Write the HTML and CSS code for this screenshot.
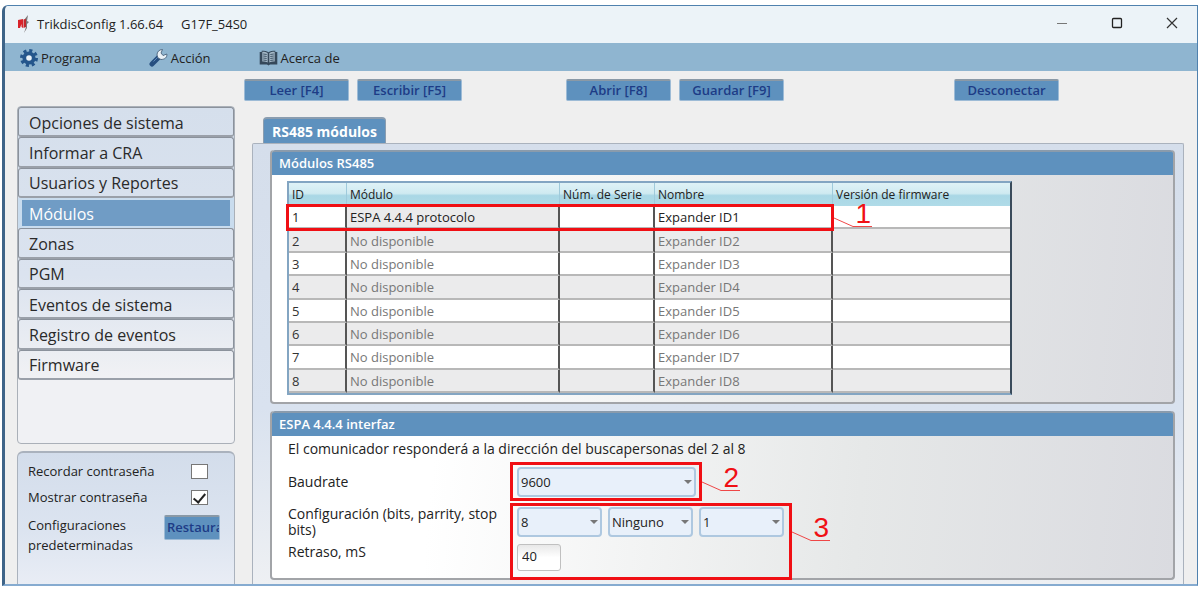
FILE: index.html
```html
<!DOCTYPE html>
<html lang="es">
<head>
    <meta charset="UTF-8">
    <meta name="viewport" content="width=device-width, initial-scale=1.0">
    <title>TrikdisConfig 1.66.64</title>
    <link rel="stylesheet" href="styles.css">
</head>
<body>
    <div class="window">
        <header class="titlebar">
            <svg class="logo" width="12" height="18" viewBox="0 0 12 18">
                <path d="M0 5l5-1v9l-1.500-1V9L2 13H0z" fill="#d8232a"/>
                <path d="M10 0L6 5v6l2 1-2 6 3-5V9l2-2-2-1z" fill="#7d7678"/>
                <path d="M5.500 4.500L8 4v8l-2.500 1z" fill="#c3262b"/>
            </svg>
            <span class="app-name">TrikdisConfig 1.66.64</span>
            <span class="device">G17F_54S0</span>
            <div class="window-buttons">
                <button type="button" aria-label="Minimizar"><svg width="12" height="12" viewBox="0 0 12 12"><path d="M1 6.500h10" stroke="#777"/></svg></button>
                <button type="button" aria-label="Maximizar"><svg width="12" height="12" viewBox="0 0 12 12"><rect x="1.500" y="1.500" width="9" height="9" rx="1" fill="none" stroke="#222" stroke-width="1.300"/></svg></button>
                <button type="button" aria-label="Cerrar"><svg width="12" height="12" viewBox="0 0 12 12"><path d="M1 1l10 10M11 1L1 11" stroke="#333" stroke-width="1.200"/></svg></button>
            </div>
        </header>

        <nav class="menubar">
            <button type="button">
                <svg width="18" height="18" viewBox="0 0 18 18">
                    <circle cx="9" cy="9" r="7.500" fill="none" stroke="#24568c" stroke-width="3" stroke-dasharray="3.100 2.790"/>
                    <circle cx="9" cy="9" r="4.700" fill="#e8f1f8" stroke="#24568c" stroke-width="3.800"/>
                </svg>
                Programa
            </button>
            <button type="button">
                <svg width="19" height="18" viewBox="0 0 19 18">
                    <path d="M10 8L3 15" stroke="#274f80" stroke-width="5" stroke-linecap="round"/>
                    <path d="M9 9l-1-3c0-3 2-5.500 5.500-5.500L12 4l2 2.500 3.800-1.500c.6 3.500-2.300 5.500-5.800 5.500z" fill="#e9f0f6" stroke="#4b627b" stroke-width=".9"/>
                    <path d="M4.500 12.500l4-4" stroke="#5f8bbb"/>
                </svg>
                Acción
            </button>
            <button type="button">
                <svg width="19" height="16" viewBox="0 0 19 16">
                    <path d="M.7 2v12.500H8l1.500 1 1.500-1h7.300V2h-2V.8c-3 0-5 .3-6.800 1.400C7.700 1.100 5.700.8 2.700.8V2z" fill="#35485a"/>
                    <path d="M3.300 1.800c2.500 0 4 .3 5.400 1.200v9.600c-1.500-.8-3-1-5.400-1zM15.700 1.800c-2.500 0-4 .3-5.400 1.200v9.600c1.500-.8 3-1 5.400-1z" fill="#a3b7c6"/>
                    <path d="M4.200 4l3.500.5M4.200 6l3.500.5M4.200 8l3.500.5M4.200 10l3.500.5M14.800 4l-3.500.5M14.800 6l-3.500.5M14.800 8l-3.500.5M14.800 10l-3.500.5" stroke="#44596b"/>
                </svg>
                Acerca de
            </button>
        </nav>

        <div class="toolbar">
            <button type="button" class="btn">Leer [F4]</button>
            <button type="button" class="btn">Escribir [F5]</button>
            <button type="button" class="btn file-group">Abrir [F8]</button>
            <button type="button" class="btn">Guardar [F9]</button>
            <button type="button" class="btn disconnect">Desconectar</button>
        </div>

        <div class="content">
            <aside class="sidebar">
                <nav class="side-nav">
                    <div class="side-list">
                        <a href="#">Opciones de sistema</a>
                        <a href="#">Informar a CRA</a>
                        <a href="#">Usuarios y Reportes</a>
                        <a href="#" class="active">Módulos</a>
                        <a href="#">Zonas</a>
                        <a href="#">PGM</a>
                        <a href="#">Eventos de sistema</a>
                        <a href="#">Registro de eventos</a>
                        <a href="#">Firmware</a>
                    </div>
                </nav>
                <div class="side-options">
                    <div class="option">
                        <label for="remember">Recordar contraseña</label>
                        <input type="checkbox" id="remember">
                    </div>
                    <div class="option">
                        <label for="show">Mostrar contraseña</label>
                        <input type="checkbox" id="show" checked>
                    </div>
                    <div class="option defaults">
                        <span>Configuraciones predeterminadas</span>
                        <button type="button" class="btn restore">Restaurar</button>
                    </div>
                </div>
            </aside>

            <main class="main">
                <button type="button" class="tab">RS485 módulos</button>
                <div class="tab-panel">
                    <section class="card">
                        <h2>Módulos RS485</h2>
                        <div class="table-wrap">
                            <table>
                                <colgroup>
                                    <col class="c-id"><col class="c-mod"><col class="c-serial"><col class="c-name"><col>
                                </colgroup>
                                <thead>
                                    <tr><th>ID</th><th>Módulo</th><th>Núm. de Serie</th><th>Nombre</th><th>Versión de firmware</th></tr>
                                </thead>
                                <tbody>
                                    <tr class="enabled"><td>1</td><td>ESPA 4.4.4 protocolo</td><td></td><td>Expander ID1</td><td></td></tr>
                                    <tr><td>2</td><td>No disponible</td><td></td><td>Expander ID2</td><td></td></tr>
                                    <tr><td>3</td><td>No disponible</td><td></td><td>Expander ID3</td><td></td></tr>
                                    <tr><td>4</td><td>No disponible</td><td></td><td>Expander ID4</td><td></td></tr>
                                    <tr><td>5</td><td>No disponible</td><td></td><td>Expander ID5</td><td></td></tr>
                                    <tr><td>6</td><td>No disponible</td><td></td><td>Expander ID6</td><td></td></tr>
                                    <tr><td>7</td><td>No disponible</td><td></td><td>Expander ID7</td><td></td></tr>
                                    <tr><td>8</td><td>No disponible</td><td></td><td>Expander ID8</td><td></td></tr>
                                </tbody>
                            </table>
                            <div class="callout callout-row">
                                <div class="tag">
                                    <svg width="38" height="11" viewBox="0 0 38 11"><path d="M0 1l19 8.500h19" fill="none" stroke="#e33" stroke-width=".9"/></svg>
                                    <span>1</span>
                                </div>
                            </div>
                        </div>
                    </section>

                    <section class="card">
                        <h2>ESPA 4.4.4 interfaz</h2>
                        <form class="settings">
                            <p>El comunicador responderá a la dirección del buscapersonas del 2 al 8</p>

                            <label for="baudrate">Baudrate</label>
                            <div class="fields">
                                <div class="select wide"><select id="baudrate"><option>9600</option></select></div>
                            </div>

                            <label for="bits">Configuración (bits, parrity, stop bits)</label>
                            <div class="fields">
                                <div class="select"><select id="bits"><option>8</option></select></div>
                                <div class="select"><select aria-label="Paridad"><option>Ninguno</option></select></div>
                                <div class="select"><select aria-label="Stop bits"><option>1</option></select></div>
                            </div>

                            <label for="delay" class="delay-label">Retraso, mS</label>
                            <div class="fields delay-field">
                                <input type="text" id="delay" value="40">
                            </div>

                            <div class="callout callout-baud">
                                <div class="tag">
                                    <svg width="38" height="11" viewBox="0 0 38 11"><path d="M0 1l19 8.500h19" fill="none" stroke="#e33" stroke-width=".9"/></svg>
                                    <span>2</span>
                                </div>
                            </div>
                            <div class="callout callout-config">
                                <div class="tag">
                                    <svg width="38" height="11" viewBox="0 0 38 11"><path d="M0 1l19 8.500h19" fill="none" stroke="#e33" stroke-width=".9"/></svg>
                                    <span>3</span>
                                </div>
                            </div>
                        </form>
                    </section>
                </div>
            </main>
        </div>
    </div>
</body>
</html>
```
FILE: styles.css
```css
* {
    box-sizing: border-box;
}
body {
    margin: 0;
    padding: 5px 2px 3px;
    background: #fff;
    font-family: "Open Sans", "Noto Sans", sans-serif;
    font-size: 13px;
    color: #222;
}
button, input, select {
    font: inherit;
    color: inherit;
}
.window {
    display: flex;
    flex-direction: column;
    height: calc(100vh - 8px);
    overflow: hidden;
    background: #efefef;
    border: 1px solid #4f81ae;
    border-left: 3px solid #3e6488;
    border-bottom: 2px solid #86abd0;
    border-top-left-radius: 6px;
}

/* title bar */
.titlebar {
    display: flex;
    align-items: center;
    height: 37px;
    flex-shrink: 0;
    padding: 0 0 2px 13px;
    background: #ecf3f8;
}
.app-name {
    margin-left: 7px;
}
.device {
    margin-left: 18px;
}
.window-buttons {
    display: flex;
    margin-left: auto;
}
.window-buttons button {
    width: 55px;
    height: 35px;
    padding: 0 0 0 4px;
    border: 0;
    background: none;
}

/* menu */
.menubar {
    display: flex;
    gap: 48px;
    height: 28px;
    flex-shrink: 0;
    padding-left: 15px;
    background: #8fb5d0;
}
.menubar button {
    display: flex;
    align-items: center;
    gap: 3px;
    padding: 2px 0 0;
    border: 0;
    background: none;
}

/* toolbar */
.toolbar {
    display: flex;
    gap: 8px;
    flex-shrink: 0;
    padding: 8px 138px 5px 239px;
}
.btn {
    width: 105px;
    height: 22px;
    padding: 0 0 2px;
    border: 1px solid #9dbbd6;
    border-top: 2px solid #8a99a6;
    border-radius: 2px;
    background: #5e91be;
    color: #1d3c86;
    font-weight: 600;
    line-height: 16px;
}
.file-group {
    margin-left: 96px;
}
.disconnect {
    margin-left: auto;
}

.content {
    display: flex;
    gap: 17px;
    flex: 1;
    min-height: 0;
    padding: 0 13px 0 12px;
}

/* left column */
.sidebar {
    display: flex;
    flex-direction: column;
    gap: 7px;
    width: 218px;
    flex-shrink: 0;
}
.side-nav {
    height: 338px;
    flex-shrink: 0;
    border: 1px solid #aab0b8;
    border-radius: 4px;
    background: linear-gradient(#d5dfec, #dbe3ef 50%, #f0f1f4 80%);
}
.side-list {
    display: grid;
    grid-auto-rows: 1fr;
    height: 273px;
}
.side-list a {
    display: flex;
    align-items: center;
    padding: 2px 0 0 10px;
    border: 1px solid #8b929c;
    border-bottom: 2px solid #9aa0a9;
    border-radius: 3px;
    color: #2a2a2a;
    font-size: 16px;
    line-height: 22px;
    text-decoration: none;
}
.side-list .active {
    background: #709cc5;
    border: 2px solid #c9dcee;
    border-width: 2px 4px;
    border-radius: 0;
    color: #fff;
    padding-left: 7px;
}
.side-options {
    flex: 1;
    padding: 5px 14px 0 10px;
    border: 2px solid #aab2bd;
    border-width: 2px 1px 0;
    border-radius: 6px 6px 0 0;
    background: linear-gradient(#d3ddeb, #dce4f0 60%, #e9edf5);
}
.option {
    display: flex;
    align-items: center;
    justify-content: space-between;
    height: 26px;
    padding-right: 12px;
}
.defaults {
    height: 50px;
    padding-right: 0;
    line-height: 20px;
}
.defaults span {
    width: 130px;
}
.restore {
    width: 56px;
    height: 25px;
    margin-bottom: 16px;
    padding-left: 2px;
    overflow: hidden;
    text-align: left;
}
input[type="checkbox"] {
    appearance: none;
    width: 17px;
    height: 15px;
    margin: 0;
    border: 1px solid #777;
    background: #fff;
}
input[type="checkbox"]:checked::after {
    content: "";
    display: block;
    width: 5px;
    height: 10px;
    margin: 0 auto;
    border: solid #222;
    border-width: 0 2px 2px 0;
    transform: rotate(40deg);
}

/* right column */
.main {
    display: flex;
    flex-direction: column;
    align-items: flex-start;
    flex: 1;
    padding-top: 11px;
}
.tab {
    height: 26px;
    flex-shrink: 0;
    margin-left: 11px;
    padding: 0 8px;
    border: 1px solid #8a9db0;
    border-width: 2px 1px 0;
    border-radius: 4px 4px 0 0;
    background: #5e91be;
    color: #fff;
    font-size: 14px;
    font-weight: 700;
}
.tab-panel {
    display: flex;
    flex-direction: column;
    gap: 7px;
    align-self: stretch;
    flex: 1;
    padding: 6px 8px 0 17px;
    border: 1px solid #aab2bd;
    border-bottom: 0;
    border-radius: 2px 2px 0 0;
    background: linear-gradient(#d5deeb, #d9e2ef 60%, #eef0f3);
}
.card {
    border: 2px solid #a2a4a8;
    border-top: 0;
    border-radius: 4px;
    background: linear-gradient(95deg, #fff 18%, #e6e8e8 65%, #dadbe0);
}
.card h2 {
    height: 25px;
    margin: 0;
    padding-left: 7px;
    border-top: 2px solid #8a9bac;
    border-radius: 3px 3px 0 0;
    background: #5e91be;
    color: #fff;
    font-size: 13px;
    font-weight: 600;
    line-height: 23px;
}

/* modules table */
.table-wrap {
    position: relative;
    width: 725px;
    margin: 6px 15px 7px;
}
table {
    table-layout: fixed;
    width: 100%;
    height: 214px;
    border: 2px solid #83a5c2;
    border-right-color: #3a4b5b;
    border-spacing: 0;
    background: #fff;
}
.c-id {
    width: 58px;
}
.c-mod {
    width: 213px;
}
.c-serial {
    width: 95px;
}
.c-name {
    width: 178px;
}
th {
    height: 23px;
    padding: 1px 3px 0;
    border-right: 1px solid #9fcadb;
    background: linear-gradient(#dff2f6, #cfeaf1 45%, #a9d7e5 55%, #b0dbe8);
    font-size: 12px;
    font-weight: 400;
    line-height: 18px;
    text-align: left;
    white-space: nowrap;
}
td {
    padding: 1px 3px 0;
    border-right: 2px solid #555;
    border-bottom: 2px solid #b8b8b8;
    color: #777;
    line-height: 18px;
}
td:first-child {
    color: #333;
}
th:last-child, td:last-child {
    border-right: 0;
}
tbody tr:nth-child(even), .enabled td:nth-child(2) {
    background: #ebebec;
}
.enabled td {
    color: #222;
}

/* interface settings */
.settings {
    position: relative;
    display: grid;
    grid-template-columns: 222px 1fr;
    column-gap: 7px;
    align-items: center;
    padding: 3px 15px 5px 16px;
}
.settings p {
    grid-column: 1 / -1;
    margin: 0 0 3px;
    font-size: 14px;
    line-height: 20px;
}
.settings label {
    font-size: 14px;
    line-height: 16px;
}
.settings .delay-label {
    align-self: start;
    padding-top: 2px;
}
.fields {
    display: flex;
    gap: 6px;
    padding: 5px 0;
}
.delay-field {
    padding: 2px 0;
}
.select {
    position: relative;
    width: 85px;
}
.select.wide {
    width: 179px;
}
.select::after {
    content: "";
    position: absolute;
    top: 13px;
    right: 4px;
    border: 4px solid transparent;
    border-top-color: #777;
    border-bottom: 0;
}
select {
    appearance: none;
    display: block;
    width: 100%;
    height: 30px;
    padding: 0 2px;
    border: 2px solid #aec8e0;
    border-radius: 4px;
    background: #e8f0fa;
    font-weight: 500;
}
#delay {
    width: 44px;
    height: 27px;
    padding: 0 4px 4px;
    border: 1px solid #c0c0c0;
    border-radius: 3px;
    background: linear-gradient(#e8e8e8, #fff 50%);
    font-weight: 500;
}

/* numbered red frames */
.callout {
    position: absolute;
    border: 3px solid #f00f14;
    pointer-events: none;
}
.tag {
    position: absolute;
    left: 100%;
    top: 50%;
    width: 38px;
    height: 11px;
    margin: -4px 0 0 3px;
}
.tag span {
    position: absolute;
    right: 1px;
    bottom: 0;
    color: #f00f14;
    font-family: "Liberation Sans", Arial, sans-serif;
    font-size: 28px;
    line-height: 22px;
}
.callout-row {
    top: 23px;
    left: -1px;
    width: 548px;
    height: 27px;
}
.callout-baud {
    top: 26px;
    left: 238px;
    width: 192px;
    height: 39px;
}
.callout-config {
    top: 67px;
    left: 238px;
    width: 282px;
    height: 77px;
}
.callout-config .tag {
    top: 36%;
}
```
